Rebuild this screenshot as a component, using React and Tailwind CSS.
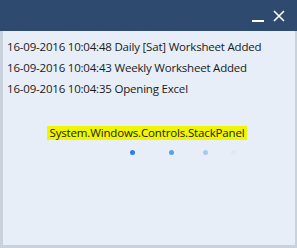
import React from 'react';

const lines = [
  '16-09-2016 10:04:48 Daily [Sat] Worksheet Added',
  '16-09-2016 10:04:43 Weekly Worksheet Added',
  '16-09-2016 10:04:35 Opening Excel',
];

const App = () => {
  return (
    <div className="w-[297px] h-[248px] bg-[#c9d1dd] flex flex-col text-[#1a1a1a]" style={{ fontFamily: '"Open Sans", "Noto Sans", sans-serif' }}>
      <div className="h-[31px] bg-[#2e4a6f] flex items-center justify-end gap-[9px] pr-[12px] shrink-0">
        <div className="w-[12px] h-[2px] bg-white mt-[10px]" />
        <svg width="12" height="12" viewBox="0 0 12 12" className="mt-[1px]">
          <path d="M1 1 L11 11 M11 1 L1 11" stroke="#fff" strokeWidth="1.6" />
        </svg>
      </div>
      <div className="flex-1 ml-[3px] mr-[2px] mb-[3px] bg-[#e7eef7] flex flex-col">
        <div className="flex flex-col pl-[4px] pt-[5px] text-[11.5px] leading-[21px] tracking-[-0.2px]">
          {lines.map((l) => (
            <div key={l}>{l}</div>
          ))}
        </div>
        <div className="flex justify-center mt-[27px]">
          <span className="bg-[#f0f500] px-[2px] text-[11.5px] leading-[14px] tracking-[-0.15px] ml-[-4px]">System.Windows.Controls.StackPanel</span>
        </div>
        <div className="flex items-center pl-[127px] mt-[10px] h-[5px]">
          <div className="w-[5px] h-[5px] rounded-full bg-[#2b80e2]" />
          <div className="w-[5px] h-[5px] rounded-full bg-[#5b9fe8] ml-[34px]" />
          <div className="w-[5px] h-[5px] rounded-full bg-[#a9c9f1] ml-[29px]" />
          <div className="w-[5px] h-[5px] rounded-full bg-[#e0e8f3] ml-[23px]" />
        </div>
      </div>
    </div>
  );
};

export default App;
